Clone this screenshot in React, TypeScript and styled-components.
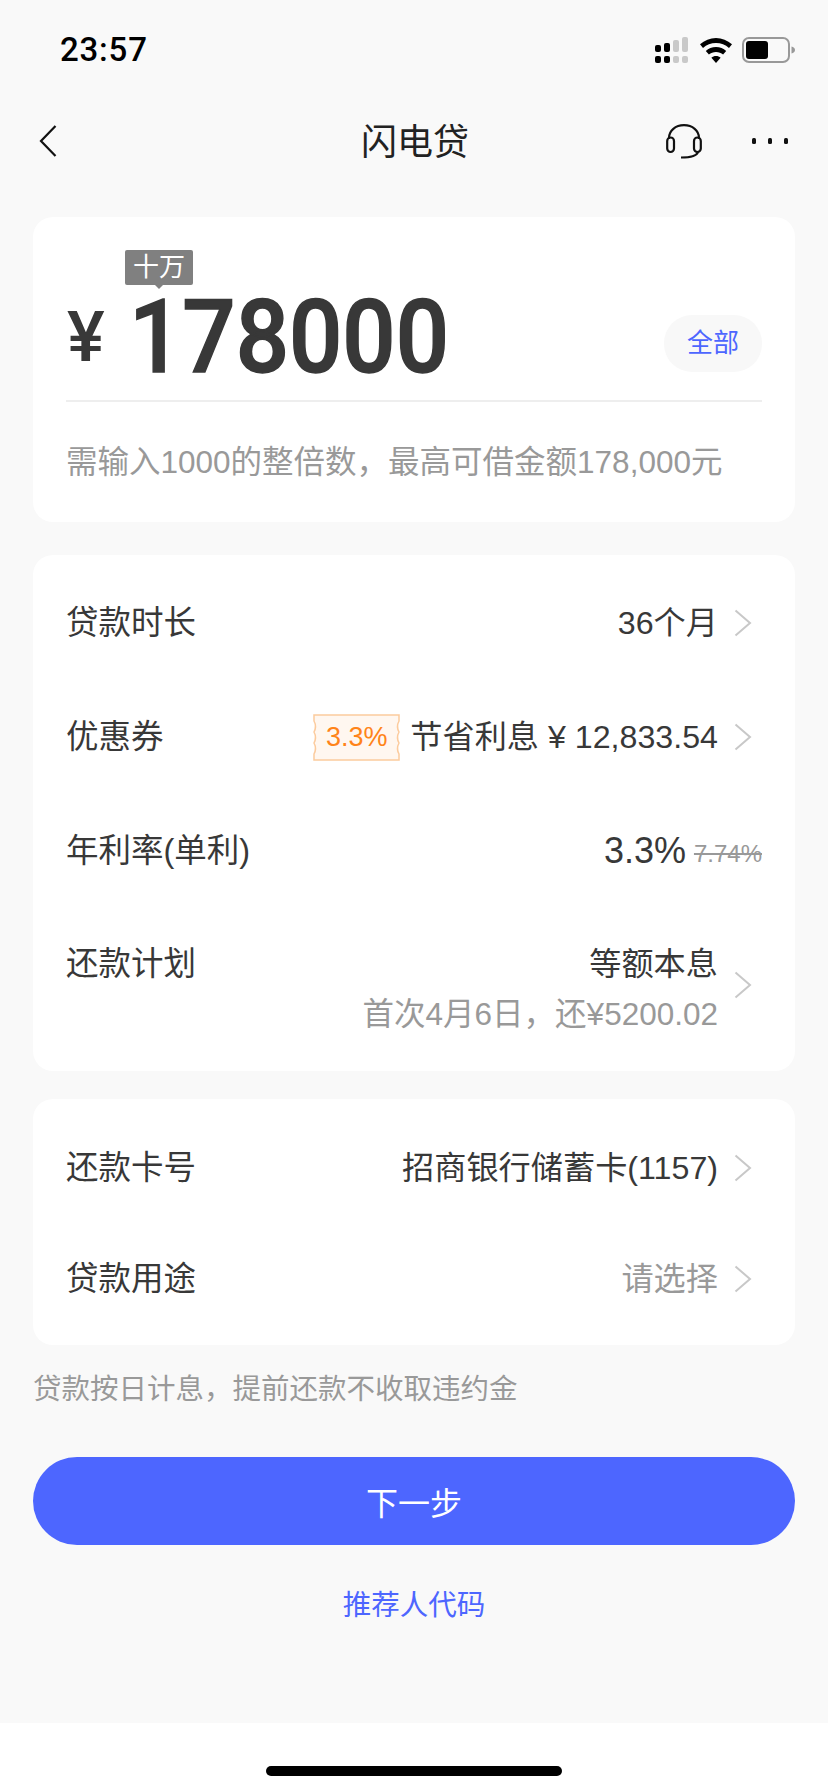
import React from "react";
import styled, { createGlobalStyle } from "styled-components";

const FONT = `"Liberation Sans", "Noto Sans CJK SC", sans-serif`;

const Global = createGlobalStyle`
  html, body { margin: 0; padding: 0; background: #f9f9f9; }
  body { font-family: ${FONT}; color: #383838; }
  * { box-sizing: border-box; }
`;

const Page = styled.div`
  width: 828px;
  height: 1792px;
  display: flex;
  flex-direction: column;
  overflow: hidden;
  background: #f9f9f9;
`;

const StatusBar = styled.div`
  height: 88px;
  flex: none;
  display: flex;
  align-items: center;
  justify-content: space-between;
  padding: 0 33px 0 60px;
`;

const Time = styled.div`
  font-family: Roboto, sans-serif;
  font-weight: 500;
  font-size: 33px;
  letter-spacing: 0.8px;
  color: #000;
  margin-top: 10px;
`;

const StatusIcons = styled.div`
  display: flex;
  align-items: center;
  margin-top: 12px;
`;

const Nav = styled.div`
  height: 106px;
  flex: none;
  display: grid;
  grid-template-columns: 1fr auto 1fr;
  align-items: center;
  padding: 0 40px 0 39px;
`;

const NavTitle = styled.div`
  font-size: 36px;
  color: #222;
  margin: -4px 0 0 3px;
`;

const NavRight = styled.div`
  display: flex;
  justify-content: flex-end;
  align-items: center;
  gap: 51px;
`;

const NavLeft = styled.div`
  display: flex;
  align-items: center;
`;

const Main = styled.div`
  flex: 1;
  padding: 23px 33px 0;
  display: flex;
  flex-direction: column;
`;

const Card = styled.section<{ $mt?: number; $pt?: number; $pb?: number }>`
  background: #fff;
  border-radius: 20px;
  padding: ${(p) => p.$pt ?? 0}px 33px ${(p) => p.$pb ?? 0}px;
  margin-top: ${(p) => p.$mt ?? 0}px;
`;

const AmountCard = styled(Card)`
  height: 305px;
  padding-top: 83px;
`;

const AmountRow = styled.div`
  position: relative;
  height: 102px;
  display: flex;
  align-items: center;
  border-bottom: 2px solid #eeeeee;
`;

const Yen = styled.span`
  font-family: Roboto, sans-serif;
  font-weight: 500;
  font-size: 71px;
  line-height: 1;
  color: #383838;
  margin: -28px 0 0 1px;
  width: 62px;
  flex: none;
`;

const Digits = styled.span`
  font-family: Roboto, sans-serif;
  font-weight: 500;
  font-size: 102px;
  line-height: 76px;
  color: #383838;
  -webkit-text-stroke: 1.5px #383838;
  transform: scaleX(0.92);
  transform-origin: left center;
  margin-top: -26px;
`;

const Bubble = styled.div`
  position: absolute;
  left: 59px;
  top: -50px;
  width: 68px;
  height: 35px;
  background: #808080;
  border-radius: 2px;
  color: #fff;
  font-size: 26px;
  line-height: 35px;
  text-align: center;

  &::after {
    content: "";
    position: absolute;
    left: 30px;
    top: 35px;
    border-left: 4px solid transparent;
    border-right: 4px solid transparent;
    border-top: 4px solid #808080;
  }
`;

const AllButton = styled.div`
  margin-left: auto;
  margin-top: -13px;
  width: 98px;
  height: 57px;
  border-radius: 28px;
  background: #f8f8f8;
  color: #4d66ff;
  font-size: 26px;
  line-height: 57px;
  text-align: center;
`;

const Hint = styled.div`
  font-size: 31.5px;
  line-height: 40px;
  color: #999;
  margin-top: 40px;
  white-space: nowrap;
`;

const Row = styled.div<{ $h?: number }>`
  height: ${(p) => p.$h ?? 114}px;
  display: flex;
  align-items: center;
`;

const TallRow = styled.div`
  display: flex;
  align-items: flex-start;
  padding-top: 30px;
`;

const Label = styled.div`
  font-size: 32.5px;
  line-height: 52px;
  color: #383838;
  white-space: nowrap;
`;

const Value = styled.div<{ $muted?: boolean }>`
  margin-left: auto;
  font-size: 32.2px;
  line-height: 52px;
  color: ${(p) => (p.$muted ? "#999" : "#383838")};
  white-space: nowrap;
  display: flex;
  align-items: center;
`;

const Stack = styled.div`
  margin-left: auto;
  display: flex;
  flex-direction: column;
  align-items: flex-end;
`;

const Line = styled.div`
  font-size: 32.2px;
  line-height: 52px;
  color: #383838;
`;

const SubLine = styled.div`
  font-size: 31.5px;
  line-height: 44px;
  color: #999;
  margin-top: 2px;
  white-space: nowrap;
`;

const ChevronBox = styled.span`
  flex: none;
  width: 44px;
  display: flex;
  justify-content: flex-end;
  padding-right: 10px;
`;

const TallChevron = styled(ChevronBox)`
  align-self: center;
  margin-top: -5px;
`;

const Coupon = styled.span`
  position: relative;
  width: 87px;
  height: 47px;
  margin-right: 10px;
  display: inline-flex;
  align-items: center;
  justify-content: center;
  color: #ff8419;
  font-size: 27px;
  line-height: 47px;
`;

const CouponShape = styled.svg`
  position: absolute;
  inset: 0;
`;

const CouponText = styled.span`
  position: relative;
`;

const Rate = styled.span`
  font-size: 36px;
  color: #383838;
`;

const OldRate = styled.span`
  font-size: 24px;
  color: #999;
  text-decoration: line-through;
  margin-left: 8px;
  margin-top: 6px;
`;

const Note = styled.div`
  font-size: 28.5px;
  line-height: 40px;
  color: #999;
  margin-top: 24px;
  white-space: nowrap;
`;

const NextButton = styled.button`
  display: block;
  width: 100%;
  height: 88px;
  margin-top: 48px;
  border: 0;
  border-radius: 44px;
  background: #4d66ff;
  color: #fff;
  font-family: ${FONT};
  font-size: 32px;
`;

const Referrer = styled.div`
  margin-top: 38px;
  text-align: center;
  color: #4d66ff;
  font-size: 28.5px;
  line-height: 44px;
`;

const Footer = styled.div`
  height: 69px;
  flex: none;
  background: #fff;
  display: flex;
  justify-content: center;
  padding-top: 43px;
`;

const HomeBar = styled.div`
  width: 296px;
  height: 10px;
  border-radius: 5px;
  background: #000;
`;

const Chevron = () => (
  <svg width="18" height="28" viewBox="0 0 18 28" fill="none">
    <path d="M1.500 1.500 L16 14 L1.500 26.500" stroke="#c8c8c8" strokeWidth="2" />
  </svg>
);

const SignalIcon = () => (
  <svg width="33" height="26" viewBox="0 0 33 26" style={{ display: "block" }}>
    <g fill="#000">
      <rect x="0" y="8" width="6" height="7" rx="2" />
      <rect x="9" y="6" width="6" height="9" rx="2" />
      <rect x="0" y="19" width="6" height="7" rx="2" />
      <rect x="9" y="19" width="6" height="7" rx="2" />
    </g>
    <g fill="#c9c9c9">
      <rect x="18" y="3" width="6" height="12" rx="2" />
      <rect x="27" y="0" width="6" height="15" rx="2" />
      <rect x="18" y="19" width="6" height="7" rx="2" />
      <rect x="27" y="19" width="6" height="7" rx="2" />
    </g>
  </svg>
);

const WifiIcon = () => (
  <svg width="32" height="25" viewBox="0 0 32 25" style={{ display: "block", marginLeft: 12 }}>
    <path d="M16 0C10 0 4.500 2.300 0 6.300L3 10C6.600 6.800 11 5 16 5C21 5 25.400 6.800 29 10L32 6.300C27.500 2.300 22 0 16 0Z" fill="#000" />
    <path d="M16 9C12 9 8.500 10.500 5.800 12.900L8.900 16.500C10.800 14.900 13.200 14 16 14C18.800 14 21.200 14.900 23.100 16.500L26.200 12.900C23.500 10.500 20 9 16 9Z" fill="#000" />
    <path d="M16 18C14.200 18 12.600 18.600 11.400 19.700L16 25L20.600 19.700C19.400 18.600 17.800 18 16 18Z" fill="#000" />
  </svg>
);

const BatteryIcon = () => (
  <svg width="53" height="26" viewBox="0 0 53 26" style={{ display: "block", marginLeft: 10 }}>
    <rect x="1" y="1" width="46" height="24" rx="6" fill="none" stroke="#999" strokeWidth="2" />
    <rect x="4" y="4" width="22" height="18" rx="3" fill="#000" />
    <path d="M49.500 9.500C51.500 10 53 11.300 53 13C53 14.700 51.500 16 49.500 16.500Z" fill="#999" />
  </svg>
);

const BackIcon = () => (
  <svg width="18" height="32" viewBox="0 0 18 32" fill="none" style={{ display: "block" }}>
    <path d="M16.500 1 L2 16 L16.500 31" stroke="#111" strokeWidth="2.200" />
  </svg>
);

const HeadsetIcon = () => (
  <svg width="36" height="35" viewBox="0 0 36 35" fill="none" style={{ display: "block", marginRight: -1 }}>
    <g stroke="#111" strokeWidth="2.200">
      <path d="M3 15V14C3 6.500 9.500 1.200 18 1.200C26.500 1.200 33 6.500 33 14V15" />
      <rect x="1.200" y="13.500" width="6.800" height="14.500" rx="3.400" />
      <rect x="28" y="13.500" width="6.800" height="14.500" rx="3.400" />
      <path d="M32 28C31 31.500 26 33.500 15 33.500" />
    </g>
  </svg>
);

const DotsIcon = () => (
  <svg width="36" height="6" viewBox="0 0 36 6" style={{ display: "block" }}>
    <rect x="0" y="0" width="4" height="6" rx="1.500" fill="#111" />
    <rect x="16" y="0" width="4" height="6" rx="1.500" fill="#111" />
    <rect x="32" y="0" width="4" height="6" rx="1.500" fill="#111" />
  </svg>
);

const scallop =
  "M1 1H86V7Q83 12.500 86 18Q83 23.500 86 29Q83 34.500 86 40V46H1V40Q4 34.500 1 29Q4 23.500 1 18Q4 12.500 1 7Z";

export default function App() {
  return (
    <Page>
      <Global />
      <StatusBar>
        <Time>23:57</Time>
        <StatusIcons>
          <SignalIcon />
          <WifiIcon />
          <BatteryIcon />
        </StatusIcons>
      </StatusBar>
      <Nav>
        <NavLeft>
          <BackIcon />
        </NavLeft>
        <NavTitle>闪电贷</NavTitle>
        <NavRight>
          <HeadsetIcon />
          <DotsIcon />
        </NavRight>
      </Nav>
      <Main>
        <AmountCard>
          <AmountRow>
            <Bubble>十万</Bubble>
            <Yen>¥</Yen>
            <Digits>178000</Digits>
            <AllButton>全部</AllButton>
          </AmountRow>
          <Hint>需输入1000的整倍数，最高可借金额178,000元</Hint>
        </AmountCard>

        <Card $mt={33} $pt={11} $pb={35}>
          <Row>
            <Label>贷款时长</Label>
            <Value>36个月</Value>
            <ChevronBox><Chevron /></ChevronBox>
          </Row>
          <Row>
            <Label>优惠券</Label>
            <Value>
              <Coupon>
                <CouponShape width="87" height="47" viewBox="0 0 87 47">
                  <path d={scallop} fill="#fff7f0" stroke="#fccb9d" strokeWidth="1.500" />
                </CouponShape>
                <CouponText>3.3%</CouponText>
              </Coupon>
              节省利息 ¥ 12,833.54
            </Value>
            <ChevronBox><Chevron /></ChevronBox>
          </Row>
          <Row>
            <Label>年利率(单利)</Label>
            <Value>
              <Rate>3.3%</Rate>
              <OldRate>7.74%</OldRate>
            </Value>
          </Row>
          <TallRow>
            <Label>还款计划</Label>
            <Stack>
              <Line>等额本息</Line>
              <SubLine>首次4月6日，还¥5200.02</SubLine>
            </Stack>
            <TallChevron><Chevron /></TallChevron>
          </TallRow>
        </Card>

        <Card $mt={28} $pt={12} $pb={13}>
          <Row>
            <Label>还款卡号</Label>
            <Value>招商银行储蓄卡(1157)</Value>
            <ChevronBox><Chevron /></ChevronBox>
          </Row>
          <Row $h={107}>
            <Label>贷款用途</Label>
            <Value $muted>请选择</Value>
            <ChevronBox><Chevron /></ChevronBox>
          </Row>
        </Card>

        <Note>贷款按日计息，提前还款不收取违约金</Note>
        <NextButton>下一步</NextButton>
        <Referrer>推荐人代码</Referrer>
      </Main>
      <Footer>
        <HomeBar />
      </Footer>
    </Page>
  );
}
